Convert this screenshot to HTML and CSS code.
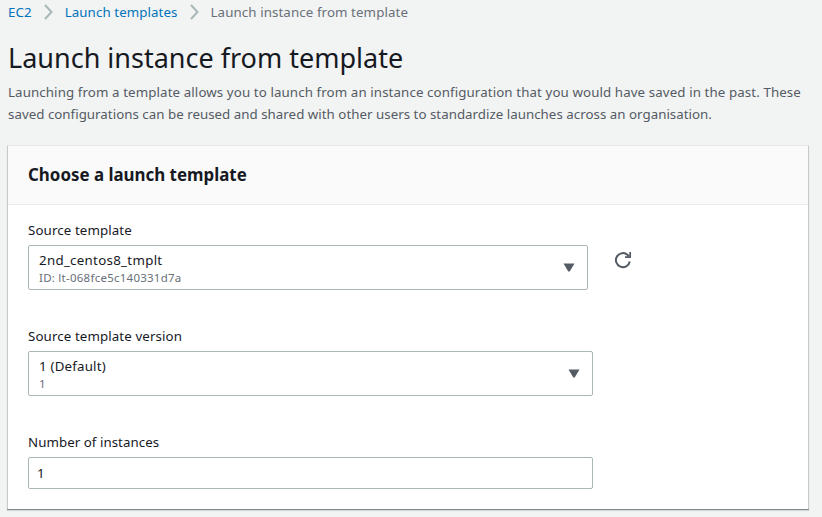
FILE: index.html
```html
<!DOCTYPE html>
<html lang="en"><head><meta charset="utf-8"><title>Launch instance from template</title><link rel="stylesheet" href="styles.css"></head>
<body>
<nav class="crumbs"><a class="c1">EC2</a><svg class="chev" viewBox="0 0 9 16"><path d="M1 1l6.500 7L1 15"/></svg><a class="c2">Launch templates</a><svg class="chev" viewBox="0 0 9 16"><path d="M1 1l6.500 7L1 15"/></svg><span class="c3">Launch instance from template</span></nav>
<h1>Launch instance from template</h1>
<p class="intro"><span class="i1">Launching from a template allows you to launch from an instance configuration that you would have saved in the past. These</span><br><span class="i2">saved configurations can be reused and shared with other users to standardize launches across an organisation.</span></p>
<section class="card">
<header><h2>Choose a launch template</h2></header>
<div class="content">
<div class="field"><label>Source template</label><div class="row"><div class="select short"><div><div class="value v1">2nd_centos8_tmplt</div><div class="sub">ID: lt-068fce5c140331d7a</div></div><svg class="arrow" viewBox="0 0 12 9"><path d="M.5.500h11L6.700 8.500H5.300z"/></svg></div><svg class="refresh" viewBox="0 0 18 18"><path class="arc" d="M15.800 10.500A7 7 0 1 1 13.700 4L15 5.500"/><path class="tip" d="M15.300 1H17v6h-6V5.300h4.300z"/></svg></div></div>
<div class="field"><label>Source template version</label><div class="select"><div><div class="value v2">1 (Default)</div><div class="sub">1</div></div><svg class="arrow" viewBox="0 0 12 9"><path d="M.5.500h11L6.700 8.500H5.300z"/></svg></div></div>
<div class="field"><label class="l3">Number of instances</label><div class="input">1</div></div>
</div></section>
</body></html>
```
FILE: styles.css
```css
*{box-sizing:border-box}
body{margin:0;height:517px;overflow:hidden;padding:0 13px 0 8px;background:#f2f3f3;color:#16191f;font:13.300px/22px "Noto Sans",sans-serif;white-space:nowrap}
.crumbs{display:flex;align-items:center;height:24px;color:#687078}
.crumbs a{color:#0073bb}
.c1{letter-spacing:.1px}
.c2{letter-spacing:.09px}
.c3{letter-spacing:.1px}
.chev{width:9px;height:16px;margin:0 12px;fill:none;stroke:#aab7b8;stroke-width:2}
h1{margin:17px 0 0;font-size:27px;font-weight:400;line-height:34px}
.intro{margin:6px 0 20px;color:#545b64}
.i1{letter-spacing:.107px}
.i2{letter-spacing:.027px}
.card{height:364px;margin-left:-1px;background:#fff;border:1px solid #c5cbcc;border-top-color:#e5e8e8;border-bottom:0;box-shadow:0 1px 0 #7f898c,0 2px 1px #d5dbdb}
header{height:59px;padding:0 20px;background:#fafafa;border-bottom:1px solid #eaeded}
h2{margin:0;font-size:16.900px;line-height:58px}
.content{padding:14px 20px}
.field{height:106px}
.field:last-child{height:auto}
label{display:block;height:26px;line-height:22px;letter-spacing:.11px}
.l3{letter-spacing:.05px}
.row{display:flex;align-items:center;gap:26px}
.select{display:flex;align-items:center;justify-content:space-between;width:565px;height:45px;border:1px solid #aab7b8;border-radius:2px;padding:0 12px 0 10px}
.short{width:560px}
.value{line-height:19px;padding-top:1px;letter-spacing:.2px}
.v1{letter-spacing:.3px}
.sub{font-size:11.500px;line-height:16px;letter-spacing:.25px;color:#687078}
.arrow{width:12px;height:9px;fill:#545b64}
.refresh{width:18px;height:18px;margin-top:-15px}
.arc{fill:none;stroke:#545b64;stroke-width:2}
.tip{fill:#545b64}
.input{width:565px;height:32px;border:1px solid #aab7b8;border-radius:2px;padding:0 8px;line-height:30px}
```
